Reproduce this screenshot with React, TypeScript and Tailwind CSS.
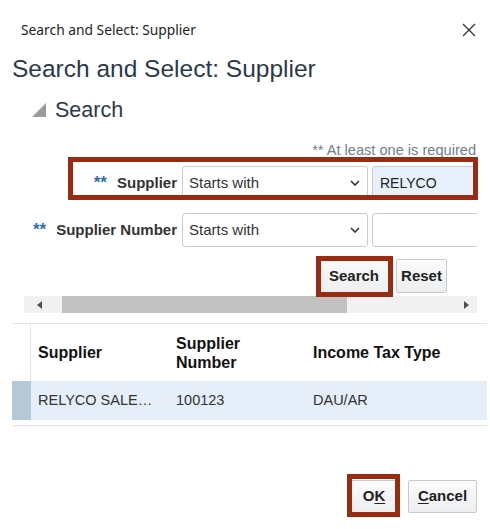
import React from "react";

const Chevron = () => (
  <svg width="10" height="6" viewBox="0 0 10 6" className="shrink-0">
    <polyline points="1,1 5,5 9,1" fill="none" stroke="#333" strokeWidth="1.6" />
  </svg>
);

const Select = () => (
  <div className="ml-[5px] flex h-[34px] w-[186px] shrink-0 items-center justify-between rounded-[3px] border border-[#c6ccd2] bg-white pl-[6px] pr-[7px] text-[15px] text-[#333]">
    <span>Starts with</span>
    <Chevron />
  </div>
);

const Btn = ({ children, className = "" }: { children: React.ReactNode; className?: string }) => (
  <div
    className={
      "flex items-center justify-center rounded-[2px] border border-[#c3cad1] bg-gradient-to-b from-[#fbfbfc] to-[#eceef0] text-[15px] font-bold text-[#222] " +
      className
    }
  >
    {children}
  </div>
);

export default function App() {
  return (
    <div className="relative h-[529px] w-[490px] overflow-hidden bg-white font-['Liberation_Sans',Arial,sans-serif]">
      {/* title bar */}
      <div className="flex items-start justify-between pl-[21px] pr-[14px] pt-[20px]">
        <span className="font-['Noto_Sans',sans-serif] text-[13.8px] leading-[20px] text-[#1e1e1e]">
          Search and Select: Supplier
        </span>
        <svg width="14" height="14" viewBox="0 0 14 14" className="mt-[3px]">
          <line x1="1" y1="1" x2="13" y2="13" stroke="#333" strokeWidth="1.2" />
          <line x1="13" y1="1" x2="1" y2="13" stroke="#333" strokeWidth="1.2" />
        </svg>
      </div>

      <h1 className="ml-[12px] mt-[15px] text-[24.5px] leading-[28px] text-[#2a3a4a]">
        Search and Select: Supplier
      </h1>

      <div className="ml-[32px] mt-[15px] flex items-center">
        <svg width="14" height="14" viewBox="0 0 14 14">
          <polygon points="14,0 14,14 0,14" fill="#9c9c9c" />
        </svg>
        <span className="ml-[9px] text-[21.5px] leading-[24px] text-[#2a3a4a]">Search</span>
      </div>

      {/* form */}
      <div className="w-[477px] overflow-hidden">
        <div className="mt-[20px] pr-[1px] text-right text-[14.6px] leading-[17px] text-[#6f7f8e]">
          ** At least one is required
        </div>

        <div className="mt-[7px] flex h-[34px] items-center">
          <div className="flex w-[177px] shrink-0 items-baseline justify-end">
            <span className="text-[17px] font-bold text-[#2d6fb4]">**</span>
            <span className="ml-[10px] text-[15px] font-bold text-[#333]">Supplier</span>
          </div>
          <Select />
          <div className="ml-[4px] flex h-[34px] w-[150px] shrink-0 items-center rounded-[3px] border border-[#c6ccd2] bg-[#e8f0fe] pl-[7px] text-[14px] text-[#222]">
            RELYCO
          </div>
        </div>

        <div className="mt-[13px] flex h-[34px] items-center">
          <div className="flex w-[177px] shrink-0 items-baseline justify-end">
            <span className="text-[17px] font-bold text-[#2d6fb4]">**</span>
            <span className="ml-[10px] text-[15px] font-bold text-[#333]">Supplier Number</span>
          </div>
          <Select />
          <div className="ml-[4px] h-[34px] w-[150px] shrink-0 rounded-[3px] border border-[#c6ccd2] bg-white" />
        </div>

        <div className="mt-[12px] flex justify-end gap-[6px] pr-[30px]">
          <Btn className="h-[34px] w-[72px]">Search</Btn>
          <Btn className="h-[34px] w-[51px]">Reset</Btn>
        </div>

        {/* horizontal scrollbar */}
        <div className="ml-[24px] mt-[3px] flex h-[17px] w-[453px] items-center bg-[#f1f1f1]">
          <div className="flex w-[38px] justify-center pr-[8px]">
            <svg width="5" height="8" viewBox="0 0 5 8">
              <polygon points="5,0 5,8 0,4" fill="#505050" />
            </svg>
          </div>
          <div className="h-[17px] w-[285px] bg-[#c1c1c1]" />
          <div className="flex flex-1 justify-end pr-[8px]">
            <svg width="5" height="8" viewBox="0 0 5 8">
              <polygon points="0,0 5,4 0,8" fill="#505050" />
            </svg>
          </div>
        </div>
      </div>

      {/* table */}
      <div className="ml-[12px] mt-[10px] w-[475px] border-t border-[#e3e3e3]">
        <div className="flex h-[57px] items-center text-[16px] font-bold leading-[19px] text-[#111]">
          <div className="h-full w-[19px] shrink-0 border-r border-[#e6e6e6]" />
          <div className="w-[138px] shrink-0 pl-[7px]">Supplier</div>
          <div className="w-[137px] shrink-0 pl-[7px]">
            Supplier
            <br />
            Number
          </div>
          <div className="pl-[7px]">Income Tax Type</div>
        </div>
        <div className="flex h-[39px] items-center bg-[#e6eff9] text-[14.5px] text-[#333]">
          <div className="h-full w-[19px] shrink-0 bg-[#b6c9d9]" />
          <div className="w-[138px] shrink-0 pl-[7px]">RELYCO SALE…</div>
          <div className="w-[137px] shrink-0 pl-[7px]">100123</div>
          <div className="pl-[7px]">DAU/AR</div>
        </div>
        <div className="mt-[5px] h-[1px] bg-[#e3e3e3]" />
      </div>

      {/* footer buttons */}
      <div className="mt-[54px] flex justify-end gap-[11px] pr-[13px]">
        <Btn className="h-[33px] w-[46px]">
          <span>
            O<span className="underline underline-offset-2">K</span>
          </span>
        </Btn>
        <Btn className="h-[33px] w-[69px]">
          <span>
            <span className="underline underline-offset-2">C</span>ancel
          </span>
        </Btn>
      </div>

      {/* annotation boxes */}
      <div className="pointer-events-none absolute left-[68px] top-[157px] h-[43px] w-[410px] border-[5px] border-[#992b10]" />
      <div className="pointer-events-none absolute left-[316px] top-[256px] h-[41px] w-[77px] border-[5px] border-[#992b10]" />
      <div className="pointer-events-none absolute left-[347px] top-[474px] h-[43px] w-[53px] border-[5px] border-[#992b10]" />
    </div>
  );
}
